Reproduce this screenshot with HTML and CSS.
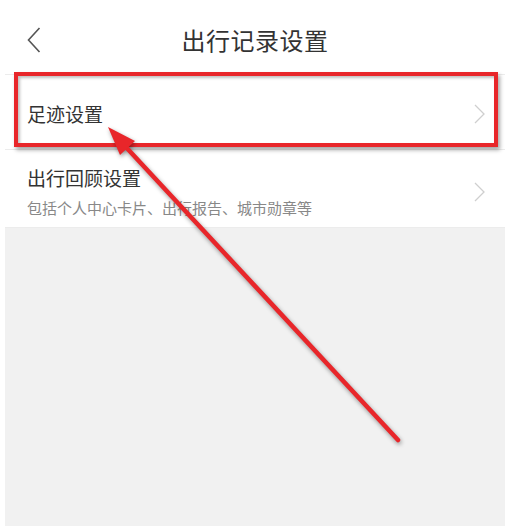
FILE: index.html
```html
<!DOCTYPE html>
<html lang="zh-CN">
<head>
    <meta charset="UTF-8">
    <meta name="viewport" content="width=device-width, initial-scale=1.0">
    <title>出行记录设置</title>
    <link rel="stylesheet" href="styles.css">
</head>
<body>

    <div class="screen">
        <div class="top-bar">
            <span class="back">
                <svg width="14" height="26" viewBox="0 0 14 26">
                    <polyline points="12.5,1 1.5,13 12.5,25" fill="none" stroke="#555" stroke-width="1.6"/>
                </svg>
            </span>
            <h1 class="title">出行记录设置</h1>
        </div>

        <div class="menu">
            <div class="menu-item item-short">
                <div class="item-text">
                    <div class="item-title">足迹设置</div>
                </div>
                <span class="arrow-right">
                    <svg width="11" height="20" viewBox="0 0 11 20">
                        <polyline points="1,1 10,10 1,19" fill="none" stroke="#cfcfcf" stroke-width="1.3"/>
                    </svg>
                </span>
            </div>

            <div class="menu-item item-tall">
                <div class="item-text">
                    <div class="item-title">出行回顾设置</div>
                    <div class="item-desc">包括个人中心卡片、出行报告、城市勋章等</div>
                </div>
                <span class="arrow-right">
                    <svg width="11" height="20" viewBox="0 0 11 20">
                        <polyline points="1,1 10,10 1,19" fill="none" stroke="#cfcfcf" stroke-width="1.3"/>
                    </svg>
                </span>
            </div>
        </div>

        <!-- annotation: red box + arrow drawn over the page -->
        <div class="highlight-box"></div>
        <svg class="pointer" width="505" height="526" viewBox="0 0 505 526">
            <line x1="398" y1="440" x2="124" y2="145" stroke="#e8262a" stroke-width="4.5" stroke-linecap="round"/>
            <polygon points="108,127 135,141 120,155" fill="#e8262a"/>
        </svg>
    </div>

</body>
</html>
```

FILE: styles.css
```css
body {
    margin: 0;
    padding: 0;
    background: #fff;
    font-family: "Noto Sans CJK SC", "Noto Sans", sans-serif;
}

.screen {
    position: relative;
    width: 505px;
    height: 526px;
    overflow: hidden;
    background: #fff;
}

.top-bar {
    display: flex;
    align-items: center;
    justify-content: center;
    position: relative;
    height: 74px;
    margin-left: 5px;
    border-bottom: 1px solid #ececec;
}

.back {
    position: absolute;
    left: 22px;
    top: 27px;
    line-height: 0;
}

.title {
    margin: 4px 0 0 0;
    font-size: 24px;
    font-weight: normal;
    color: #333;
    letter-spacing: 0.5px;
}

.menu {
    margin-left: 5px;
    background: #f1f1f1;
    height: 451px;
}

.menu-item {
    display: flex;
    align-items: center;
    box-sizing: border-box;
    background: #fff;
    padding: 0 20px 0 22px;
    border-bottom: 1px solid #ececec;
}

.item-short {
    height: 75px;
    padding-top: 4px;
}

.item-tall {
    height: 78px;
    padding-top: 6px;
}

.item-text {
    flex: 1;
}

.item-title {
    font-size: 19px;
    color: #333;
    line-height: 24px;
}

.item-desc {
    font-size: 15px;
    color: #888;
    line-height: 20px;
    margin-top: 8px;
}

.arrow-right {
    line-height: 0;
}

.highlight-box {
    position: absolute;
    left: 14px;
    top: 72px;
    width: 476px;
    height: 67px;
    border: 4px solid #e8262a;
    box-shadow: 2px 3px 4px rgba(0, 0, 0, 0.35), inset 2px 2px 3px rgba(0, 0, 0, 0.25);
}

.pointer {
    position: absolute;
    left: 0;
    top: 0;
    filter: drop-shadow(1px 2px 2px rgba(0, 0, 0, 0.4));
}
```
